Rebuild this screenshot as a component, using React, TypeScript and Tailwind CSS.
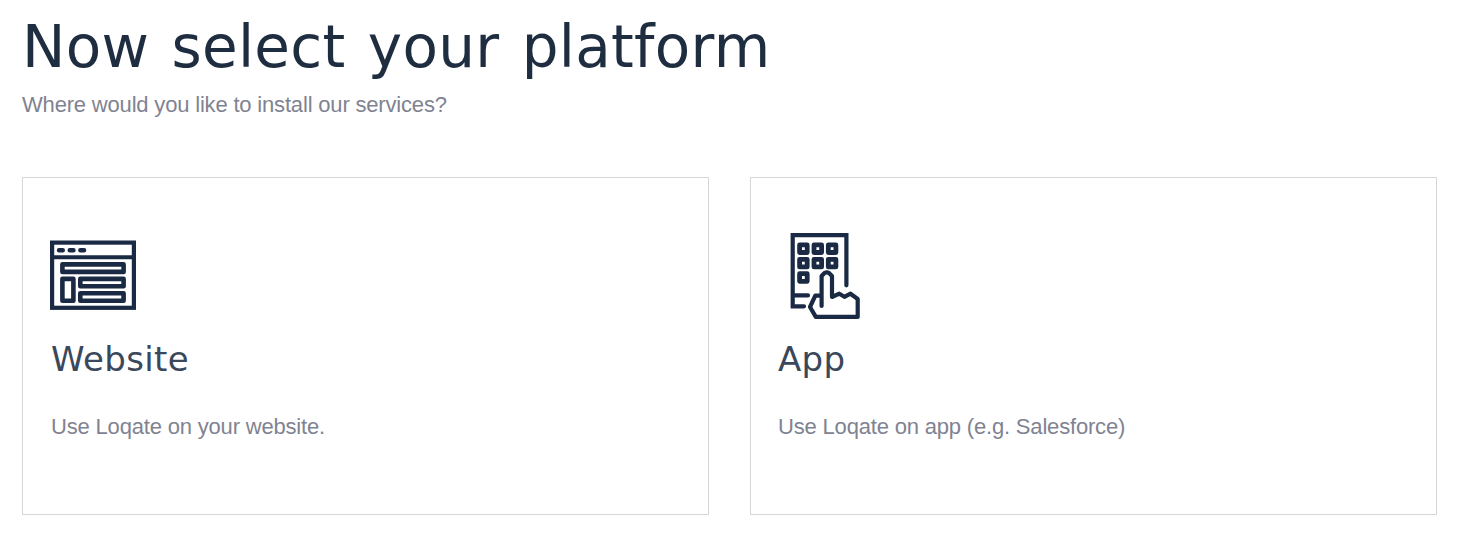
import React from "react";

function WebsiteIcon() {
  return (
    <svg width="86" height="70" viewBox="0 0 86 70" fill="none" stroke="#1b2a44" strokeWidth="4.6" strokeLinejoin="round">
      <rect x="2.100" y="2.600" width="81.800" height="65.200" strokeWidth="4.200" strokeLinejoin="miter" />
      <path d="M2 17.300H84" strokeWidth="4" />
      <path d="M9 10.300h3.800M19.700 10.300h3.800M30.300 10.300h3.800" strokeWidth="4.400" strokeLinecap="round" />
      <rect x="12.400" y="24.400" width="61.200" height="7.500" />
      <rect x="12.400" y="38.900" width="11" height="21.900" />
      <rect x="30.300" y="38.900" width="43.300" height="7.400" />
      <rect x="30.300" y="53.300" width="43.300" height="7.500" />
    </svg>
  );
}

function AppIcon() {
  return (
    <svg width="70" height="86" viewBox="0 0 70 86" fill="none" stroke="#1b2a44" strokeWidth="4.2" strokeLinejoin="round">
      <path d="M56.400 52.300V2.100H2.700V73.300H14M2.700 62.400H18" strokeLinecap="round" strokeLinejoin="miter" />
      <g strokeWidth="4.800">
        <rect x="9.600" y="11.900" width="7.600" height="7.600" />
        <rect x="24" y="11.900" width="7.600" height="7.600" />
        <rect x="38.300" y="11.900" width="7.600" height="7.600" />
        <rect x="9.600" y="26.300" width="7.600" height="7.600" />
        <rect x="24" y="26.300" width="7.600" height="7.600" />
        <rect x="38.300" y="26.300" width="7.600" height="7.600" />
        <rect x="9.600" y="40.700" width="7.600" height="7.600" />
      </g>
      <path
        d="M31.600 73V43L34.500 40L36.800 39.300L39 40L42 43V64L49.300 60.700L54.400 63.800L60.500 60.700L67.700 66V83.900H25.800L20 74L25.300 62.700H31"
        strokeLinecap="round"
      />
    </svg>
  );
}

type CardProps = { title: string; text: string; icon: React.ReactNode; iconClass: string; textClass: string };

function PlatformCard({ title, text, icon, iconClass, textClass }: CardProps) {
  return (
    <section className="h-[338px] w-[687px] border border-[#d7d7d7] pl-[27px]">
      <div className={iconClass}>{icon}</div>
      <div className={textClass}>
        <h2 className="font-['DejaVu_Sans',sans-serif] text-[34px] leading-[40px] tracking-[0.35px] text-[#3b475b]">{title}</h2>
        <p className="mt-[34px] text-[22px] leading-[28px] tracking-[-0.18px] text-[#7f8391]">{text}</p>
      </div>
    </section>
  );
}

export default function App() {
  return (
    <main className="h-[538px] w-[1460px] overflow-hidden bg-white pl-[22px] pt-[10px] font-['Liberation_Sans',sans-serif]">
      <h1 className="h-[81px] whitespace-nowrap font-['DejaVu_Sans',sans-serif] text-[58px] leading-[74px] tracking-[0.3px] text-[#1f2d40] [word-spacing:3.5px]">
        Now select your platform
      </h1>
      <p className="text-[22px] leading-[28px] tracking-[-0.18px] text-[#7f8391]">Where would you like to install our services?</p>
      <div className="mt-[58px] flex gap-[41px]">
        <PlatformCard title="Website" text="Use Loqate on your website." icon={<WebsiteIcon />} iconClass="h-[161px] pt-[62px]" textClass="pl-px" />
        <PlatformCard title="App" text="Use Loqate on app (e.g. Salesforce)" icon={<AppIcon />} iconClass="h-[161px] pt-[55px] pl-[12px]" textClass="" />
      </div>
    </main>
  );
}
